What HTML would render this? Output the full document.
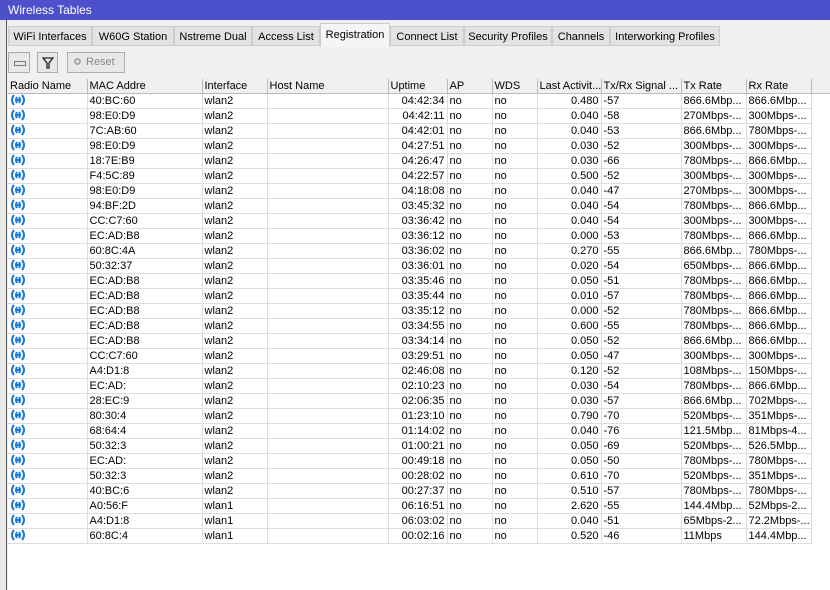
<!DOCTYPE html><html><head><style>
body{margin:0;width:830px;height:590px;overflow:hidden;background:#f0f0f0;font-family:"Liberation Sans",sans-serif;font-size:11px;position:relative}
.title{position:absolute;left:0;top:0;width:830px;height:20px;background:#4c50cb;color:#fff;font-size:12px;line-height:20px;padding-left:8px;box-sizing:border-box}
.lb{position:absolute;left:0;top:20px;width:6px;height:570px;background:#e8e8e8;border-right:1px solid #555}
.tab{position:absolute;top:26px;height:20px;line-height:20px;background:#e3e3e3;border:1px solid #ccc;text-align:center;color:#000;box-sizing:border-box}
.tab.a{top:23px;height:24px;background:#f5f5f5;border-bottom:none;line-height:22px}
.btn{position:absolute;top:52px;height:21px;border:1px solid #adadad;background:#e8e8e8;box-sizing:border-box}
table{position:absolute;left:8px;top:79px;width:822px;border-collapse:collapse;table-layout:fixed;background:#fff}
td{height:14px;padding:0 2px;border-right:1px solid #ddd;border-bottom:1px solid #ddd;white-space:nowrap;overflow:hidden;line-height:14px}
tr.h td{background:#f0f0f0;border-right:1px solid #bbb;border-bottom:1px solid #bbb}
.r{text-align:right}
.bg{position:absolute;left:8px;top:79px;width:822px;height:511px;background:#fff}
</style></head><body>
<div class="title">Wireless Tables</div>
<div class="lb"></div>
<div class="tab" style="left:8px;width:84px">WiFi Interfaces</div>
<div class="tab" style="left:92px;width:82px">W60G Station</div>
<div class="tab" style="left:174px;width:78px">Nstreme Dual</div>
<div class="tab" style="left:252px;width:68px">Access List</div>
<div class="tab a" style="left:320px;width:70px">Registration</div>
<div class="tab" style="left:390px;width:74px">Connect List</div>
<div class="tab" style="left:464px;width:88px">Security Profiles</div>
<div class="tab" style="left:552px;width:58px">Channels</div>
<div class="tab" style="left:610px;width:110px">Interworking Profiles</div>
<div class="btn" style="left:8px;width:22px"><div style="position:absolute;left:5px;top:8px;width:10px;height:3px;border:1px solid #777"></div></div>
<div class="btn" style="left:37px;width:21px"><svg width="19" height="19" style="position:absolute;left:0;top:0"><path d="M5 5H15L11 10V15H9V10Z" fill="none" stroke="#222" stroke-width="1.3"/></svg></div>
<div class="btn" style="left:67px;width:58px;color:#888;line-height:19px;padding-left:18px">Reset<span style="position:absolute;left:6px;top:5px;width:7px;height:7px;border-radius:50%;border:2px solid #aaa;box-sizing:border-box"></span></div>
<div class="bg"></div>
<table id="t"><colgroup><col style="width:79px"><col style="width:115px"><col style="width:65px"><col style="width:121px"><col style="width:59px"><col style="width:45px"><col style="width:45px"><col style="width:64px"><col style="width:80px"><col style="width:65px"><col style="width:65px"><col style="width:19px"></colgroup>
<tr class="h"><td>Radio Name</td><td>MAC Addre</td><td>Interface</td><td>Host Name</td><td>Uptime</td><td>AP</td><td>WDS</td><td>Last Activit...</td><td>Tx/Rx Signal ...</td><td>Tx Rate</td><td>Rx Rate</td><td></td></tr>
</table>
<script>
var d=[["40:BC:60","wlan2","04:42:34","0.480","-57","866.6Mbp...","866.6Mbp..."],["98:E0:D9","wlan2","04:42:11","0.040","-58","270Mbps-...","300Mbps-..."],["7C:AB:60","wlan2","04:42:01","0.040","-53","866.6Mbp...","780Mbps-..."],["98:E0:D9","wlan2","04:27:51","0.030","-52","300Mbps-...","300Mbps-..."],["18:7E:B9","wlan2","04:26:47","0.030","-66","780Mbps-...","866.6Mbp..."],["F4:5C:89","wlan2","04:22:57","0.500","-52","300Mbps-...","300Mbps-..."],["98:E0:D9","wlan2","04:18:08","0.040","-47","270Mbps-...","300Mbps-..."],["94:BF:2D","wlan2","03:45:32","0.040","-54","780Mbps-...","866.6Mbp..."],["CC:C7:60","wlan2","03:36:42","0.040","-54","300Mbps-...","300Mbps-..."],["EC:AD:B8","wlan2","03:36:12","0.000","-53","780Mbps-...","866.6Mbp..."],["60:8C:4A","wlan2","03:36:02","0.270","-55","866.6Mbp...","780Mbps-..."],["50:32:37","wlan2","03:36:01","0.020","-54","650Mbps-...","866.6Mbp..."],["EC:AD:B8","wlan2","03:35:46","0.050","-51","780Mbps-...","866.6Mbp..."],["EC:AD:B8","wlan2","03:35:44","0.010","-57","780Mbps-...","866.6Mbp..."],["EC:AD:B8","wlan2","03:35:12","0.000","-52","780Mbps-...","866.6Mbp..."],["EC:AD:B8","wlan2","03:34:55","0.600","-55","780Mbps-...","866.6Mbp..."],["EC:AD:B8","wlan2","03:34:14","0.050","-52","866.6Mbp...","866.6Mbp..."],["CC:C7:60","wlan2","03:29:51","0.050","-47","300Mbps-...","300Mbps-..."],["A4:D1:8","wlan2","02:46:08","0.120","-52","108Mbps-...","150Mbps-..."],["EC:AD:","wlan2","02:10:23","0.030","-54","780Mbps-...","866.6Mbp..."],["28:EC:9","wlan2","02:06:35","0.030","-57","866.6Mbp...","702Mbps-..."],["80:30:4","wlan2","01:23:10","0.790","-70","520Mbps-...","351Mbps-..."],["68:64:4","wlan2","01:14:02","0.040","-76","121.5Mbp...","81Mbps-4..."],["50:32:3","wlan2","01:00:21","0.050","-69","520Mbps-...","526.5Mbp..."],["EC:AD:","wlan2","00:49:18","0.050","-50","780Mbps-...","780Mbps-..."],["50:32:3","wlan2","00:28:02","0.610","-70","520Mbps-...","351Mbps-..."],["40:BC:6","wlan2","00:27:37","0.510","-57","780Mbps-...","780Mbps-..."],["A0:56:F","wlan1","06:16:51","2.620","-55","144.4Mbp...","52Mbps-2..."],["A4:D1:8","wlan1","06:03:02","0.040","-51","65Mbps-2...","72.2Mbps-..."],["60:8C:4","wlan1","00:02:16","0.520","-46","11Mbps","144.4Mbp..."]];
var ic='<svg width="16" height="12" style="vertical-align:-2px"><path d="M4 1Q0 6 4 11M7 3Q5 6 7 9M12 1Q16 6 12 11M9 3Q11 6 9 9M6 6H10" fill="none" stroke="#1a7ad8" stroke-width="2"/></svg>';
var h='';d.forEach(function(r){h+='<tr><td>'+ic+'</td><td>'+r[0]+'</td><td>'+r[1]+'</td><td></td><td class="r">'+r[2]+'</td><td>no</td><td>no</td><td class="r">'+r[3]+'</td><td>'+r[4]+'</td><td>'+r[5]+'</td><td>'+r[6]+'</td><td style="border:none;background:#fff"></td></tr>'});
document.getElementById('t').insertAdjacentHTML('beforeend',h);
</script>
</body></html>
